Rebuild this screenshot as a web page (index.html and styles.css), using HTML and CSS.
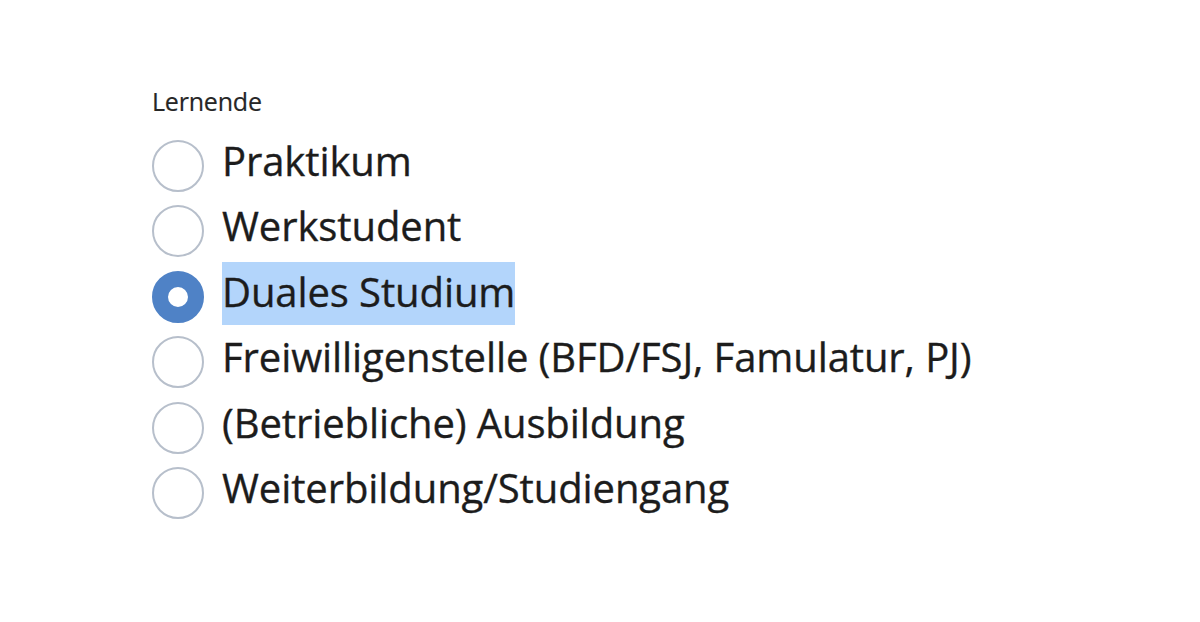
FILE: index.html
```html
<!DOCTYPE html>
<html lang="de">
<head>
<meta charset="utf-8">
<link rel="stylesheet" href="styles.css">
</head>
<body>
<div class="group" role="radiogroup" aria-label="Lernende">
  <div class="group-label">Lernende</div>
  <label class="option"><span class="radio"></span><span class="text">Praktikum</span></label>
  <label class="option"><span class="radio"></span><span class="text">Werkstudent</span></label>
  <label class="option"><span class="radio checked"></span><span class="text selected">Duales Studium</span></label>
  <label class="option"><span class="radio"></span><span class="text">Freiwilligenstelle (BFD/FSJ, Famulatur, PJ)</span></label>
  <label class="option"><span class="radio"></span><span class="text">(Betriebliche) Ausbildung</span></label>
  <label class="option"><span class="radio"></span><span class="text">Weiterbildung/Studiengang</span></label>
</div>
</body>
</html>
```
FILE: styles.css
```css
html, body {
  margin: 0;
  padding: 0;
  background: #ffffff;
}
body {
  font-family: "Open Sans", "Noto Sans", sans-serif;
  color: #1f1f1f;
}
.group {
  padding: 86px 0 0 152px;
  display: flex;
  flex-direction: column;
  align-items: flex-start;
}
.group-label {
  font-size: 25px;
  line-height: 30px;
  color: #262626;
  letter-spacing: -0.2px;
  margin-bottom: 14.5px;
  -webkit-text-stroke: 0.2px #262626;
}
.option {
  display: flex;
  align-items: flex-start;
  height: 65.6px;
  gap: 18px;
}
.radio {
  box-sizing: border-box;
  width: 52px;
  height: 52px;
  margin-top: 9px;
  border-radius: 50%;
  border: 2px solid #b7bfcb;
  background: #fff;
  flex: none;
}
.radio.checked {
  border: 16px solid #4f82c6;
}
.text {
  font-size: 40px;
  letter-spacing: -0.1px;
  line-height: 59px;
  padding-bottom: 4px;
  color: #1c1c1c;
  -webkit-text-stroke: 0.35px #1c1c1c;
}
.selected {
  background: #b3d5fb;
}
```
